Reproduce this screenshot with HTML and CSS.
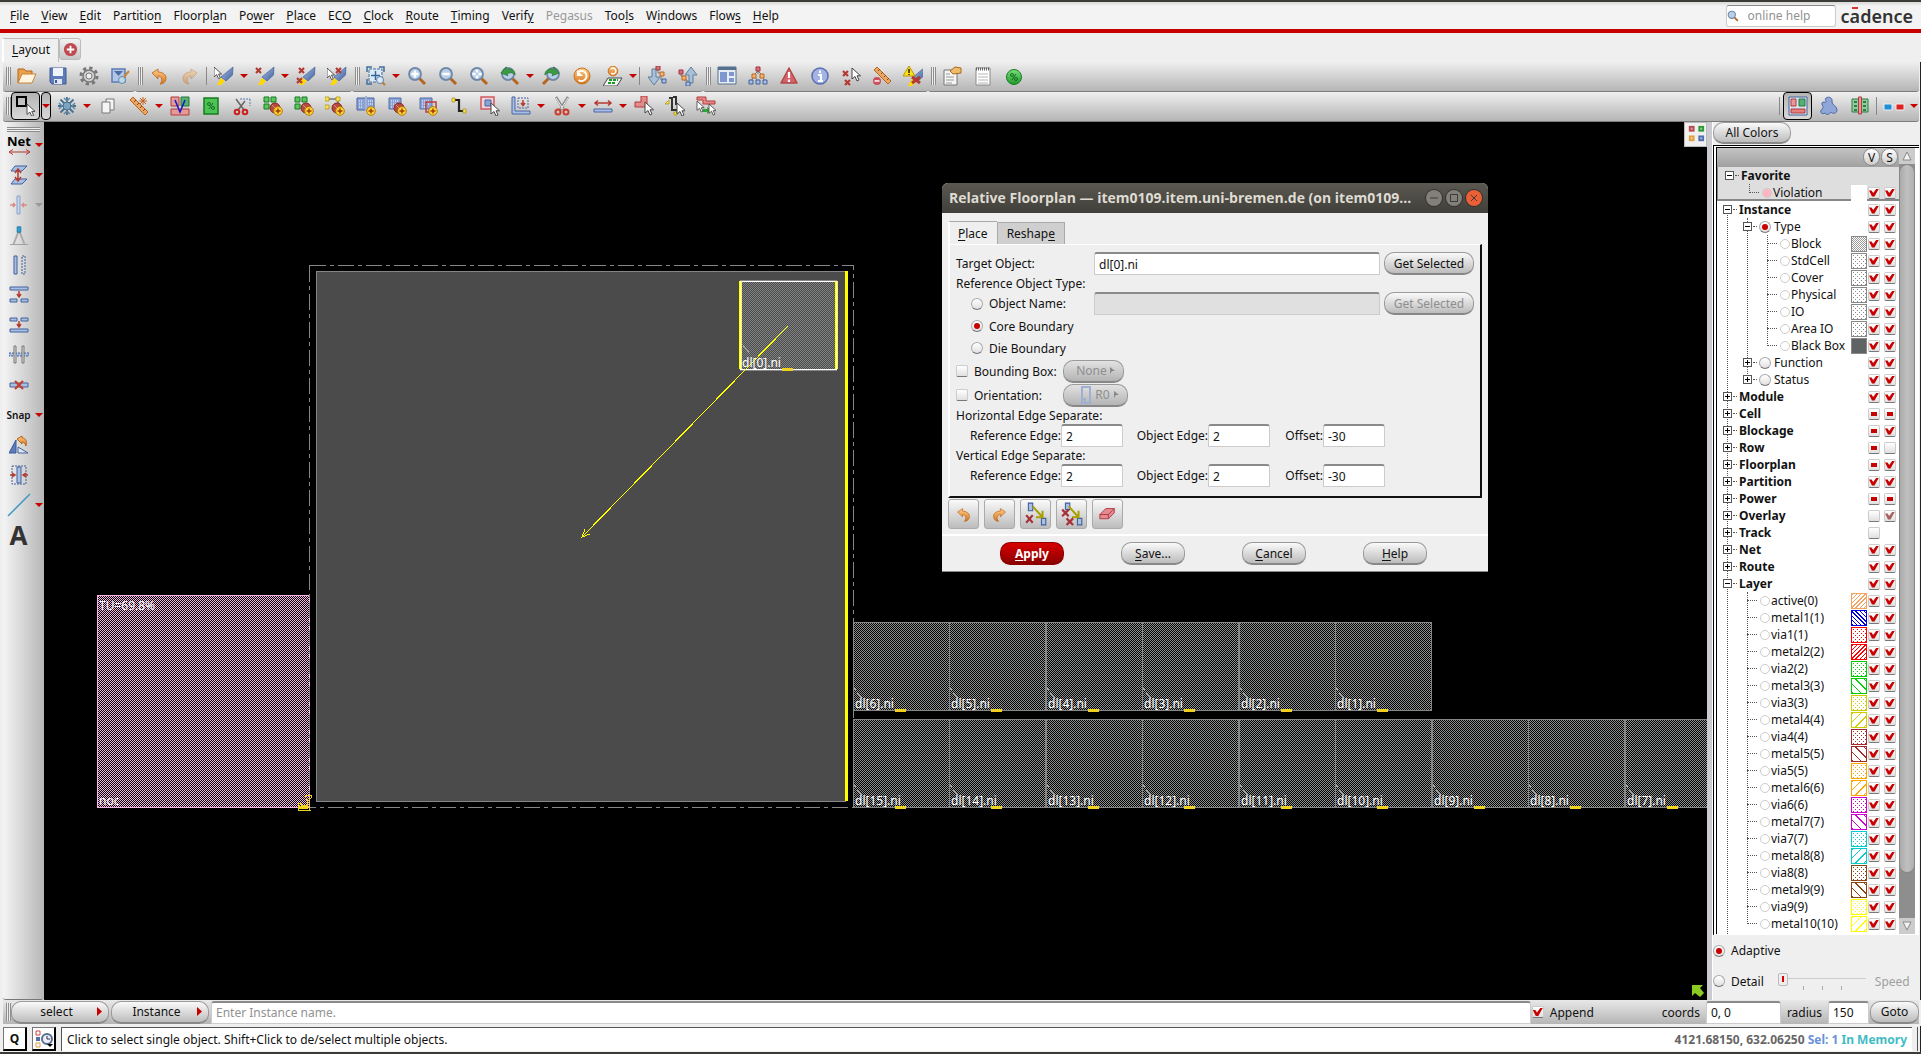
FILE: index.html
```html
<!DOCTYPE html>
<html lang="en">
<head>
<meta charset="utf-8">
<title>Layout</title>
<link rel="stylesheet" href="styles.css">
</head>
<body>
<svg class="defs" aria-hidden="true">
  <defs>
    <linearGradient id="gb" x1="0" y1="0" x2="1" y2="1"><stop offset="0" stop-color="#a9bfe4"/><stop offset="1" stop-color="#3f5f9c"/></linearGradient>
    <linearGradient id="go" x1="0" y1="0" x2="0" y2="1"><stop offset="0" stop-color="#ffcf8a"/><stop offset="1" stop-color="#d9731a"/></linearGradient>
    <linearGradient id="gg" x1="0" y1="0" x2="0" y2="1"><stop offset="0" stop-color="#7be07b"/><stop offset="1" stop-color="#1d9a28"/></linearGradient>
    <linearGradient id="gr" x1="0" y1="0" x2="0" y2="1"><stop offset="0" stop-color="#f0a5a5"/><stop offset="1" stop-color="#c03c3c"/></linearGradient>
    <path id="cur" d="M0 0V11L3 8.500L5 13L7 12L5 7.800H8.500Z" fill="#fff" stroke="#444"/>
    <path id="rx" d="M0 0L5 5M5 0L0 5" stroke="#b23a32" stroke-width="2.200"/>
    <g id="pen"><path d="M19 1L18.500 9L12 15L7 11Z" fill="url(#gb)" stroke="#42619a" stroke-width=".7"/><path d="M7 12L11 15L7 19H3Z" fill="#ffd800"/></g>
    <g id="plus"><circle cx="15" cy="15" r="4.300" fill="#ffd53d" stroke="#b97a00"/><path d="M12.500 15H17.500M15 12.500V17.500" stroke="#a33c00" stroke-width="1.500"/></g>
    <g id="mag"><path d="M12 12L18 18" stroke="#b5651d" stroke-width="3"/><circle cx="8" cy="8" r="6" fill="#b9cfe8" stroke="#7088a6" stroke-width="1.800"/></g>
    <g id="ball"><circle cx="12" cy="12" r="5" fill="#b8493f" stroke="#7c2a22"/><path d="M9 9L15 15" stroke="#e08a80"/></g>
    <path id="ugo" d="M3 7L9 3V6C14 6 17 9 17 12C17 15 15 18 11 18C14 15 13 10 9 10V13Z" fill="url(#go)" stroke="#b8651c" stroke-width=".8"/>
    <path id="grn" d="M2 9L8 2V5C13 3 18 6 18 11C15 8 12 8 9 10L10 12Z" fill="#3c9a44" stroke="#20702a" stroke-width=".7"/>
    <path id="bm" d="M2 2H14V13H2Z" fill="#8aa2d6" stroke="#5570a8"/>

    <symbol id="i-open" viewBox="0 0 20 20"><path d="M1 17V3H7L9 5H15V8" fill="#e9a24a" stroke="#b8651c"/><path d="M1 17L5 8H19L15 17Z" fill="#fff4e0" stroke="#c98238"/></symbol>
    <symbol id="i-save" viewBox="0 0 20 20"><path d="M2 2H18V18H4L2 16Z" fill="#5f7cb8" stroke="#3d5a96"/><path d="M5 2H15V10H5Z" fill="#eef3fb"/><path d="M6 13H14V18H6Z" fill="#dfe6f2"/><path d="M7 14H9V17H7Z" fill="#3d5a96"/></symbol>
    <symbol id="i-gear" viewBox="0 0 20 20"><circle cx="10" cy="10" r="8" fill="none" stroke="#77787a" stroke-width="3" stroke-dasharray="3.200 3.080"/><circle cx="10" cy="10" r="6" fill="#d4d0d0" stroke="#77787a" stroke-width="1.500"/><circle cx="10" cy="10" r="3" fill="#efefef" stroke="#77787a"/></symbol>
    <symbol id="i-sch" viewBox="0 0 20 20"><path d="M2 3H15V16H2Z" fill="#b4c6e6" stroke="#5c7bb5" stroke-width="1.500"/><path d="M4 5H13L8.500 10Z" fill="#4f6ca8"/><circle cx="12" cy="14" r="3.500" fill="#b7dbe8" stroke="#6a86a8"/><path d="M14 11L19 5" stroke="#c8853a" stroke-width="2"/></symbol>
    <symbol id="i-undo" viewBox="0 0 20 20"><use href="#ugo"/></symbol>
    <symbol id="i-redo" viewBox="0 0 20 20"><use href="#ugo" transform="translate(20 0) scale(-1 1)"/></symbol>
    <symbol id="i-hl" viewBox="0 0 20 20"><use href="#pen"/><use href="#cur" transform="translate(0 1) scale(.9)"/></symbol>
    <symbol id="i-hlx" viewBox="0 0 20 20"><use href="#pen"/><use href="#rx" x="1" y="2"/></symbol>
    <symbol id="i-hlxx" viewBox="0 0 20 20"><use href="#pen"/><use href="#rx" x="3" y="2"/><use href="#rx" x="1" y="12"/></symbol>
    <symbol id="i-hlcx" viewBox="0 0 20 20"><use href="#pen"/><use href="#cur" transform="translate(0 2) scale(.9)"/><use href="#rx" x="9" y="2"/></symbol>
    <symbol id="i-fit" viewBox="0 0 20 20"><path d="M1 6V1H6M13 1H18V6M1 13V18H6" fill="none" stroke="#3f6f9c" stroke-width="1.500"/><path d="M3 3H16V16H3Z" fill="#dce8f4" stroke="#3f6f9c" stroke-dasharray="3 1"/><path d="M9.500 5V14M5 9.500H14" stroke="#356796" stroke-width="1.500"/><circle cx="14" cy="14" r="3.500" fill="#d9e9f7" stroke="#5d81a8"/><path d="M16.500 16.500L19 19" stroke="#c07830" stroke-width="2"/></symbol>
    <symbol id="i-zin" viewBox="0 0 20 20"><use href="#mag"/><path d="M4.500 8H11.500M8 4.500V11.500" stroke="#fff" stroke-width="2.500"/></symbol>
    <symbol id="i-zout" viewBox="0 0 20 20"><use href="#mag"/><path d="M4.500 8H11.500" stroke="#fff" stroke-width="2.500"/></symbol>
    <symbol id="i-zfit" viewBox="0 0 20 20"><use href="#mag"/><path d="M8 3.500V12.500M3.500 8H12.500" stroke="#fff" stroke-width="2.500" stroke-dasharray="3 3"/></symbol>
    <symbol id="i-zprev" viewBox="0 0 20 20"><use href="#mag"/><use href="#grn" transform="translate(-1 -1) scale(.9)"/></symbol>
    <symbol id="i-znext" viewBox="0 0 20 20"><use href="#mag" transform="translate(20 0) scale(-1 1)"/><use href="#grn" transform="translate(20 -1) scale(-.9 .9)"/></symbol>
    <symbol id="i-ref" viewBox="0 0 20 20"><circle cx="10" cy="10" r="8" fill="url(#go)" stroke="#c8741c"/><path d="M6.500 6A5 5 0 1 1 6.500 14" fill="none" stroke="#fff" stroke-width="2"/><path d="M5 4V10H11Z" fill="#fff"/></symbol>
    <symbol id="i-refs" viewBox="0 0 20 20"><path d="M5 12H19L14 20H0Z" fill="#f4f4f4" stroke="#444"/><path d="M6 14H15M5 17H13" stroke="#1d9a28" stroke-width="2" stroke-dasharray="3 1"/><circle cx="10" cy="5" r="4.800" fill="url(#go)" stroke="#c8741c"/><path d="M8 3A2.800 2.800 0 1 1 8 7" fill="none" stroke="#fff" stroke-width="1.300"/></symbol>
    <symbol id="i-down" viewBox="0 0 20 20"><path d="M5 3H9V11H13L7 19L1 11H5Z" fill="#a8c0d8" stroke="#5f7f9f"/><path d="M11 3V7H14V14H17" fill="none" stroke="#777"/><path d="M9 0H13V4H9Z" fill="#d9737a" stroke="#a03038"/><path d="M13 6H17V10H13Z" fill="#f2b27a" stroke="#b86a20"/><path d="M15 13H19V17H15Z" fill="#a9bfe4" stroke="#42619a"/></symbol>
    <symbol id="i-up" viewBox="0 0 20 20"><path d="M11 17H15V9H19L13 1L7 9H11Z" fill="#a8c0d8" stroke="#5f7f9f"/><path d="M3 6V10H6V14H9V18" fill="none" stroke="#777"/><path d="M1 4H5V8H1Z" fill="#d9737a" stroke="#a03038"/><path d="M4 10H8V14H4Z" fill="#f2b27a" stroke="#b86a20"/><path d="M8 16H12V20H8Z" fill="#a9bfe4" stroke="#42619a"/></symbol>
    <symbol id="i-win" viewBox="0 0 20 20"><path d="M1 1H19V18H1Z" fill="#e9edf4" stroke="#56708f"/><path d="M1 1H19V4H1Z" fill="#56708f"/><path d="M3 6H10V16H3Z" fill="#7e98cf"/><path d="M12 6H17V10H12ZM12 12H17V16H12Z" fill="#7e98cf"/></symbol>
    <symbol id="i-tree" viewBox="0 0 20 20"><path d="M10 4V8M6 10L3 15M6 10L10 15M14 10L17 15M10 5L6 9M10 5L14 9" stroke="#777"/><path d="M8 1H12V5H8Z" fill="#d9737a" stroke="#a03038"/><path d="M4 8H8V12H4ZM12 8H16V12H12Z" fill="#f2b27a" stroke="#b86a20"/><path d="M1 14H5V18H1ZM8 14H12V18H8ZM15 14H19V18H15Z" fill="#a9bfe4" stroke="#42619a"/></symbol>
    <symbol id="i-warn" viewBox="0 0 20 20"><path d="M10 2L18 17H2Z" fill="#d8606a" stroke="#b04848" stroke-width="1.500" stroke-linejoin="round"/><path d="M10 6V12M10 13.500V16" stroke="#fff" stroke-width="2.200"/></symbol>
    <symbol id="i-info" viewBox="0 0 20 20"><circle cx="10" cy="10" r="8" fill="#a3b4e4" stroke="#5a6fb0" stroke-width="1.500"/><path d="M8 9H11V15M8 15H13M10 4.500V7" stroke="#fff" stroke-width="2" fill="none"/></symbol>
    <symbol id="i-desel" viewBox="0 0 20 20"><use href="#rx" x="2" y="5"/><use href="#rx" x="4" y="14"/><use href="#cur" transform="translate(11 2)"/></symbol>
    <symbol id="i-rulx" viewBox="0 0 20 20"><path d="M5 1L19 15L16 18L2 4Z" fill="#eaa666" stroke="#b8651c"/><path d="M8 3L6 5M11 6L9 8M14 9L12 11M17 12L15 14" stroke="#8a4a10"/><circle cx="5" cy="15" r="4" fill="#c9505a"/><path d="M2.500 15H7.500" stroke="#fff" stroke-width="1.500"/></symbol>
    <symbol id="i-wpen" viewBox="0 0 20 20"><use href="#pen" transform="translate(2 1)"/><path d="M6 0L12 10H0Z" fill="#ffe11a" stroke="#b89600"/><path d="M6 3V7M6 8V9" stroke="#000" stroke-width="1.300"/><path d="M9 11L17 17M17 11L9 17" stroke="#b23a32" stroke-width="3"/></symbol>
    <symbol id="i-note" viewBox="0 0 20 20"><path d="M2 4H15V19H2Z" fill="#f5f5f5" stroke="#777"/><path d="M4 8H8M4 11H12M4 14H12M4 17H10" stroke="#999"/><path d="M8 5L13 1L19 2V7L11 8Z" fill="#f0bb6a" stroke="#a86a1c"/></symbol>
    <symbol id="i-pad" viewBox="0 0 20 20"><path d="M3 2H17V19H3Z" fill="#fff" stroke="#888"/><path d="M3 3H17" stroke="#666" stroke-width="3" stroke-dasharray="1 1"/><path d="M5 8H15M5 11H15M5 14H15M5 17H15" stroke="#b5b5b5"/></symbol>
    <symbol id="i-pct" viewBox="0 0 20 20"><circle cx="10" cy="11" r="7.500" fill="url(#gg)" stroke="#187a22"/><circle cx="8" cy="9" r="1.500" fill="none" stroke="#176b20"/><circle cx="12" cy="13" r="1.500" fill="none" stroke="#176b20"/><path d="M12 8L8 14" stroke="#176b20"/></symbol>

    <symbol id="i-sel" viewBox="0 0 20 20"><path d="M1 1H10V10H1Z" fill="none" stroke="#000" stroke-width="2"/><use href="#cur" transform="translate(11 8)scale(.95)"/></symbol>
    <symbol id="i-frz" viewBox="0 0 20 20"><path d="M10 1V19M1 10H19M3.500 3.500L16.500 16.500M16.500 3.500L3.500 16.500" stroke="#47708f" stroke-width="1.800"/><path d="M7 2L10 5L13 2M7 18L10 15L13 18M2 7L5 10L2 13M18 7L15 10L18 13" fill="none" stroke="#5f87a5" stroke-width="1.500"/><circle cx="10" cy="10" r="4" fill="#7ea5c0" stroke="#47708f"/></symbol>
    <symbol id="i-copy" viewBox="0 0 20 20"><path d="M8 3H16V14H8Z" fill="#f5f5f5" stroke="#777"/><path d="M4 6H12V17H4Z" fill="#f5f5f5" stroke="#777"/></symbol>
    <symbol id="i-rul" viewBox="0 0 20 20"><path d="M4 1L19 16L16 19L1 4Z" fill="#eaa666" stroke="#b8651c"/><path d="M7 4L5 6M10 7L8 9M13 10L11 12M16 13L14 15" stroke="#8a4a10"/><path d="M14 1V9M10 5H18M11 2L17 8M17 2L11 8" stroke="#c0601c"/></symbol>
    <symbol id="i-v" viewBox="0 0 20 20"><path d="M1 1H9V10H1Z" fill="#e59a9a" stroke="#b23a3a"/><path d="M11 1H19V10H11Z" fill="#57b070" stroke="#237a3c"/><path d="M1 13H19V19H1Z" fill="#e59a9a" stroke="#b23a3a"/><path d="M5 4L10 16L15 4" fill="none" stroke="#1414c8" stroke-width="1.500"/></symbol>
    <symbol id="i-psq" viewBox="0 0 20 20"><path d="M3 2H17V18H3Z" fill="#4cc455" stroke="#187a22" stroke-width="1.500"/><circle cx="8" cy="8" r="1.500" fill="none" stroke="#176b20"/><circle cx="12" cy="12" r="1.500" fill="none" stroke="#176b20"/><path d="M12 7L8 13" stroke="#176b20"/></symbol>
    <symbol id="i-cut" viewBox="0 0 20 20"><path d="M8 3H18M18 3V10" fill="none" stroke="#5c7bb5" stroke-dasharray="2 1"/><path d="M4 3L12 14M13 5L6 14" stroke="#666" stroke-width="1.500"/><circle cx="5" cy="16" r="2.300" fill="none" stroke="#cc1f1f" stroke-width="2"/><circle cx="13" cy="16" r="2.300" fill="none" stroke="#cc1f1f" stroke-width="2"/></symbol>
    <symbol id="i-g1" viewBox="0 0 20 20"><path d="M1 1H6V6H1ZM8 1H13V6H8ZM1 8H6V13H1Z" fill="#58c85c" stroke="#187a22"/><use href="#ball"/><use href="#plus"/></symbol>
    <symbol id="i-g2" viewBox="0 0 20 20"><path d="M2 3H13V12" fill="none" stroke="#444"/><path d="M0 1H4V5H0ZM11 1H15V5H11ZM0 9H4V13H0Z" fill="#ffe24a" stroke="#a08c10" stroke-width=".7"/><use href="#ball"/><use href="#plus"/></symbol>
    <symbol id="i-g3" viewBox="0 0 20 20"><path d="M1 2H18V14H1Z" fill="#8aa2d6" stroke="#4a65a0"/><path d="M10 0V15" stroke="#fff" stroke-width="2"/><path d="M10 0V15" stroke="#4a65a0"/><path d="M3 5H7M3 8H7M3 11H7M12 5H17M12 8H17" stroke="#fff" stroke-dasharray="1 1"/><use href="#plus"/></symbol>
    <symbol id="i-g4" viewBox="0 0 20 20"><use href="#bm"/><path d="M4 5H12M4 8H12M4 11H10" stroke="#fff" stroke-dasharray="1 1"/><use href="#ball"/><use href="#plus"/></symbol>
    <symbol id="i-g5" viewBox="0 0 20 20"><use href="#bm"/><path d="M4 5H12M4 8H12M4 11H10" stroke="#fff" stroke-dasharray="1 1"/><path d="M8 6H18V16H8Z" fill="none" stroke="#c03c3c" stroke-width="1.500"/><use href="#plus"/></symbol>
    <symbol id="i-z" viewBox="0 0 20 20"><path d="M5 4H10V15H15" fill="none" stroke="#222" stroke-width="2.200"/><path d="M3 2H6V6H3ZM14 13H17V17H14Z" fill="#ffe24a" stroke="#a08c10" stroke-width=".7"/></symbol>
    <symbol id="i-rsel" viewBox="0 0 20 20"><path d="M1 1H14V13H1Z" fill="#f0d4d8" stroke="#d05a60" stroke-width="1.500"/><path d="M5 4H11V10H5Z" fill="#8aa2d6" stroke="#4a65a0"/><use href="#cur" transform="translate(11 7)"/></symbol>
    <symbol id="i-axis" viewBox="0 0 20 20"><path d="M1 1H4V15H19V18H1Z" fill="#a9bfe4" stroke="#4a65a0"/><path d="M7 2H17V12H7Z" fill="none" stroke="#4a65a0" stroke-dasharray="2 1"/><path d="M12 4V9M10 7L12 9.500L14 7" stroke="#b23a32" stroke-width="1.500" fill="none"/></symbol>
    <symbol id="i-cut2" viewBox="0 0 20 20"><path d="M4 1L12 14M16 1L8 14" stroke="#8a8a8a" stroke-width="2.500"/><path d="M4 2L11 13M16 2L9 13" stroke="#eee"/><circle cx="6" cy="16" r="2.500" fill="none" stroke="#cc3a2c" stroke-width="2"/><circle cx="14" cy="16" r="2.500" fill="none" stroke="#cc3a2c" stroke-width="2"/></symbol>
    <symbol id="i-bar" viewBox="0 0 20 20"><path d="M1 13H19V16H1Z" fill="#a9bfe4" stroke="#4a65a0"/><path d="M3 7H17M5 4.500L2 7L5 9.500M15 4.500L18 7L15 9.500" stroke="#b23a32" stroke-width="1.500" fill="none"/></symbol>
    <symbol id="i-poly" viewBox="0 0 20 20"><path d="M7 0H13V11H1V6H7Z" fill="#e58a8a" stroke="#b23a3a"/><use href="#cur" transform="translate(11 6)"/></symbol>
    <symbol id="i-zs" viewBox="0 0 20 20"><path d="M4 2H7V14H13M8 1H11V9" fill="none" stroke="#333" stroke-width="2"/><path d="M0 8L4 4V8ZM9 19H12V16H9Z" fill="#ffe24a" stroke="#a08c10" stroke-width=".7"/><use href="#cur" transform="translate(12 7)"/></symbol>
    <symbol id="i-rs" viewBox="0 0 20 20"><path d="M1 1H10V5H19V8H7V4H1Z" fill="#e58a8a" stroke="#b23a3a"/><use href="#cur" transform="translate(1 5)scale(.85)"/><path d="M7 13H11V11L15 14.500L11 18V16H7Z" fill="#2fa33a"/><use href="#cur" transform="translate(13 8)scale(.85)"/></symbol>
    <symbol id="i-fp" viewBox="0 0 20 20"><path d="M1 1H19V19H1Z" fill="#d9e2f3" stroke="#42619a"/><path d="M3 3H8V10H3Z" fill="#e59a9a" stroke="#b23a3a"/><path d="M11 3H17V10H11Z" fill="#57b070" stroke="#237a3c"/><path d="M3 13H17V17H3Z" fill="#e58080" stroke="#b23a3a"/></symbol>
    <symbol id="i-blob" viewBox="0 0 20 20"><path d="M7 2C10 0 14 2 13 6C13 9 18 10 18 14C18 18 13 18 12 16C10 19 7 19 6 17C3 19 0 16 3 13C6 11 2 9 3 7C4 5 6 7 7 6C8 5 5 4 7 2Z" fill="#8ea6d8" stroke="#4f68a4"/></symbol>
    <symbol id="i-phy" viewBox="0 0 20 20"><path d="M2 3H18V16H2Z" fill="#8fcf9c" stroke="#2f7a44"/><path d="M4 6H7M4 10H7M4 14H7M13 6H16M13 10H16M13 14H16" stroke="#1f5a30" stroke-width="1.500"/><path d="M8.500 1H11.500V18H8.500Z" fill="#e59a9a" stroke="#b23a3a"/></symbol>
    <symbol id="i-3d" viewBox="0 0 24 20"><path d="M1 4L2 9M23 4L22 9M1 9H23" stroke="#ddd" stroke-width="2"/><path d="M2 8H10V14H2Z" fill="#1e8fd8" stroke="#eee"/><path d="M14 8H22V14H14Z" fill="#e02020" stroke="#eee"/></symbol>

    <symbol id="l-net" viewBox="0 0 30 22"><text x="0" y="12" class="netlab">Net</text><path d="M3 18H22M6 15.500L2 18L6 20.500M19 15.500L23 18L19 20.500" stroke="#b23a32" fill="none"/></symbol>
    <symbol id="l-via" viewBox="0 0 20 20"><path d="M6 1H18L13 6H2Z" fill="#a9bfe4" stroke="#42619a"/><path d="M6 14H18L13 19H2Z" fill="#a9bfe4" stroke="#42619a"/><path d="M9 5V15M6 8L9 4L12 8M6 12L9 16L12 12" stroke="#b23a32" stroke-width="1.500" fill="none"/></symbol>
    <symbol id="l-vb" viewBox="0 0 20 20"><path d="M8 1H11V19H8Z" fill="#c5d3ec" stroke="#8ba2c8"/><path d="M1 10H6M4 8L6 10L4 12M18 10H13M15 8L13 10L15 12" stroke="#d88a84" fill="none" stroke-width="1.500"/></symbol>
    <symbol id="l-cmp" viewBox="0 0 20 22"><path d="M10 6L4 21M10 6L16 21" stroke="#aaa" stroke-width="2"/><path d="M8 2H12V8H8Z" fill="#2f9fd0" stroke="#1c7aa8"/><path d="M0 21.500H20" stroke="#999"/></symbol>
    <symbol id="l-2b" viewBox="0 0 20 20"><path d="M5 1H8V19H5Z" fill="#a9bfe4" stroke="#42619a"/><path d="M13 1H16V19H13Z" fill="none" stroke="#42619a" stroke-dasharray="2 1"/></symbol>
    <symbol id="l-t1" viewBox="0 0 20 20"><path d="M1 2H19V5H1ZM1 14H8V17H1ZM12 14H19V17H12Z" fill="#a9bfe4" stroke="#42619a"/><path d="M10 6V11M8 9L10 12L12 9" stroke="#b23a32" stroke-width="1.500" fill="none"/></symbol>
    <symbol id="l-t2" viewBox="0 0 20 20"><path d="M1 3H8V6H1ZM12 3H19V6H12ZM1 14H19V17H1Z" fill="#a9bfe4" stroke="#42619a"/><path d="M10 6V11M8 9L10 12L12 9" stroke="#b23a32" stroke-width="1.500" fill="none"/></symbol>
    <symbol id="l-hh" viewBox="0 0 20 20"><path d="M0 8H20V11H0Z" fill="#a9bfe4" stroke="#42619a" stroke-dasharray="2 1"/><path d="M5 1H7V18H5ZM13 1H15V18H13Z" fill="#ddd" stroke="#777"/></symbol>
    <symbol id="l-hx" viewBox="0 0 20 20"><path d="M1 8H19V12H1Z" fill="#a9bfe4" stroke="#42619a"/><path d="M6 6L14 14M14 6L6 14" stroke="#c0402f" stroke-width="2.200"/></symbol>
    <symbol id="l-flip" viewBox="0 0 20 20"><path d="M7 5V18H0Z" fill="#5f7cb8" stroke="#3d5a96"/><path d="M9 12L19 18H9Z" fill="#dfe7f6" stroke="#42619a"/><path d="M8 4L13 1V3C17 3 18 6 17 11C16 8 15 7 13 7V9Z" fill="url(#go)" stroke="#b8651c"/></symbol>
    <symbol id="l-al" viewBox="0 0 20 20"><path d="M3 1H17V19H3Z" fill="none" stroke="#42619a" stroke-dasharray="2 1"/><path d="M8 2H12V18H8Z" fill="#a9bfe4" stroke="#42619a"/><path d="M1 10H5M3 8L6 10L3 12M19 10H15M17 8L14 10L17 12" stroke="#b23a32" stroke-width="1.500" fill="none"/></symbol>
    <symbol id="l-line" viewBox="0 0 24 24"><path d="M1 23L23 1" stroke="#3f9ac4" stroke-width="1.500"/></symbol>

    <symbol id="d-1x" viewBox="0 0 20 22"><path d="M3 1H7V8H3ZM15 15H19V21H15Z" fill="#a9bfe4" stroke="#42619a"/><path d="M7 4L16 14M16 8V14H10" stroke="#a8a000" stroke-width="1.800" fill="none"/><path d="M1 12L7 19M7 12L1 19" stroke="#a83038" stroke-width="2"/></symbol>
    <symbol id="d-2x" viewBox="0 0 20 22"><path d="M4 1H8V7H4ZM15 15H19V21H15Z" fill="#a9bfe4" stroke="#42619a"/><path d="M7 4L16 14M16 8V14H10" stroke="#a8a000" stroke-width="1.800" fill="none"/><path d="M1 7L7 13M7 7L1 13M5 15L11 21M11 15L5 21" stroke="#a83038" stroke-width="2"/></symbol>
    <symbol id="d-er" viewBox="0 0 20 20"><path d="M1 10L8 3H18V8L11 15H1Z" fill="#e58a92" stroke="#a83038"/><path d="M1 10H11L18 3M11 10V15" fill="none" stroke="#a83038"/></symbol>

    <pattern id="chk" width="2" height="2" patternUnits="userSpaceOnUse"><path d="M0 0H1V1H0ZM1 1H2V2H1Z" fill="#8f9090"/></pattern>
    <pattern id="chp" width="2" height="2" patternUnits="userSpaceOnUse"><path d="M0 0H1V1H0ZM1 1H2V2H1Z" fill="#f8b4e4"/></pattern>
    <g id="blk"><path d="M0 0H96V88H0Z" fill="url(#chk)"/><path d="M0 .5H97M0 88.500H97M.5 0V88M96.500 0V88" stroke="#858686"/><path d="M1 66L9 77" stroke="#a0a0a0" fill="none"/><path d="M42 87H53V90H42Z" fill="#f0d020"/></g>
  </defs>
</svg>

<nav class="menubar">
  <a href="#"><u>F</u>ile</a><a href="#"><u>V</u>iew</a><a href="#"><u>E</u>dit</a><a href="#">Partitio<u>n</u></a><a href="#">Floorpl<u>a</u>n</a><a href="#">Po<u>w</u>er</a><a href="#"><u>P</u>lace</a><a href="#">EC<u>O</u></a><a href="#"><u>C</u>lock</a><a href="#"><u>R</u>oute</a><a href="#"><u>T</u>iming</a><a href="#">Verif<u>y</u></a><a href="#" class="off">Pegasus</a><a href="#">Too<u>l</u>s</a><a href="#">W<u>i</u>ndows</a><a href="#">Flow<u>s</u></a><a href="#"><u>H</u>elp</a>
  <label class="search"><svg viewBox="0 0 20 20"><use href="#mag"/></svg><input type="search" placeholder="online help" aria-label="online help"></label>
  <span class="logo">c<span class="bar">a</span>dence</span>
</nav>

<div class="tabs"><button class="tab"><span><u>L</u>ayout</span></button><button class="addtab" aria-label="Add tab"><svg viewBox="0 0 16 16"><circle cx="8" cy="8" r="7" fill="#bd4a50"/><path d="M4 8H12M8 4V12" stroke="#fff" stroke-width="2"/></svg></button></div>

<div class="bars">
  <div class="barrow">
    <div class="group"><i class="grip"></i>
      <button class="tb" aria-label="Open"><svg><use href="#i-open"/></svg></button><button class="tb" aria-label="Save"><svg><use href="#i-save"/></svg></button><button class="tb" aria-label="Settings"><svg><use href="#i-gear"/></svg></button><button class="tb" aria-label="Schematic"><svg><use href="#i-sch"/></svg></button>
    </div>
    <div class="group"><i class="grip"></i>
      <button class="tb" aria-label="Undo"><svg><use href="#i-undo"/></svg></button><button class="tb faded" aria-label="Redo"><svg><use href="#i-redo"/></svg></button><i class="sep"></i><button class="tb" aria-label="Highlight"><svg><use href="#i-hl"/></svg></button><button class="caret" aria-label="More"></button><button class="tb" aria-label="Clear highlight"><svg><use href="#i-hlx"/></svg></button><button class="caret" aria-label="More"></button><button class="tb" aria-label="Clear all highlights"><svg><use href="#i-hlxx"/></svg></button><button class="tb" aria-label="Clear selected"><svg><use href="#i-hlcx"/></svg></button>
    </div>
    <div class="group"><i class="grip"></i>
      <button class="tb" aria-label="Zoom area"><svg><use href="#i-fit"/></svg></button><button class="caret" aria-label="More"></button><button class="tb" aria-label="Zoom in"><svg><use href="#i-zin"/></svg></button><button class="tb" aria-label="Zoom out"><svg><use href="#i-zout"/></svg></button><button class="tb" aria-label="Fit"><svg><use href="#i-zfit"/></svg></button><button class="tb" aria-label="Previous view"><svg><use href="#i-zprev"/></svg></button><button class="caret" aria-label="More"></button><button class="tb" aria-label="Next view"><svg><use href="#i-znext"/></svg></button><button class="tb" aria-label="Redraw"><svg><use href="#i-ref"/></svg></button><button class="tb" aria-label="Refresh design"><svg><use href="#i-refs"/></svg></button><button class="caret" aria-label="More"></button><i class="sep"></i><button class="tb" aria-label="Descend"><svg><use href="#i-down"/></svg></button><button class="tb" aria-label="Ascend"><svg><use href="#i-up"/></svg></button>
    </div>
    <div class="group"><i class="grip"></i>
      <button class="tb" aria-label="Panels"><svg><use href="#i-win"/></svg></button><button class="tb" aria-label="Hierarchy"><svg><use href="#i-tree"/></svg></button><button class="tb" aria-label="Violations"><svg><use href="#i-warn"/></svg></button><button class="tb" aria-label="Information"><svg><use href="#i-info"/></svg></button><button class="tb" aria-label="Deselect"><svg><use href="#i-desel"/></svg></button><button class="tb" aria-label="Clear rulers"><svg><use href="#i-rulx"/></svg></button><button class="tb" aria-label="Clear markers"><svg><use href="#i-wpen"/></svg></button>
    </div>
    <div class="group grow"><i class="grip"></i>
      <button class="tb" aria-label="Properties"><svg><use href="#i-note"/></svg></button><button class="tb" aria-label="Notes"><svg><use href="#i-pad"/></svg></button><button class="tb" aria-label="Density"><svg><use href="#i-pct"/></svg></button>
    </div>
  </div>
  <div class="barrow">
    <div class="group grow"><i class="grip"></i>
      <button class="tb pressed" aria-label="Select"><svg><use href="#i-sel"/></svg></button><button class="caret pressed" aria-label="More"></button><button class="tb" aria-label="Freeze"><svg><use href="#i-frz"/></svg></button><button class="caret" aria-label="More"></button><button class="tb" aria-label="Copy"><svg><use href="#i-copy"/></svg></button><button class="tb" aria-label="Ruler"><svg><use href="#i-rul"/></svg></button><button class="caret" aria-label="More"></button><button class="tb" aria-label="Verify"><svg><use href="#i-v"/></svg></button><button class="tb" aria-label="Utilization"><svg><use href="#i-psq"/></svg></button><button class="tb" aria-label="Cut"><svg><use href="#i-cut"/></svg></button><button class="tb" aria-label="Add fence"><svg><use href="#i-g1"/></svg></button><button class="tb" aria-label="Add region"><svg><use href="#i-g1"/></svg></button><button class="tb" aria-label="Add guide"><svg><use href="#i-g2"/></svg></button><button class="tb" aria-label="Add row"><svg><use href="#i-g3"/></svg></button><button class="tb" aria-label="Add blockage"><svg><use href="#i-g4"/></svg></button><button class="tb" aria-label="Add halo"><svg><use href="#i-g5"/></svg></button><button class="tb" aria-label="Wire"><svg><use href="#i-z"/></svg></button><button class="tb" aria-label="Select block"><svg><use href="#i-rsel"/></svg></button><button class="tb" aria-label="Align"><svg><use href="#i-axis"/></svg></button><button class="caret" aria-label="More"></button><button class="tb" aria-label="Split"><svg><use href="#i-cut2"/></svg></button><button class="caret" aria-label="More"></button><button class="tb" aria-label="Stretch"><svg><use href="#i-bar"/></svg></button><button class="caret" aria-label="More"></button><button class="tb" aria-label="Select shape"><svg><use href="#i-poly"/></svg></button><button class="tb" aria-label="Select wire"><svg><use href="#i-zs"/></svg></button><button class="tb" aria-label="Reshape"><svg><use href="#i-rs"/></svg></button>
      <i class="sep push"></i><button class="tb pressed" aria-label="Floorplan view"><svg><use href="#i-fp"/></svg></button><button class="tb" aria-label="Amoeba view"><svg><use href="#i-blob"/></svg></button><button class="tb" aria-label="Physical view"><svg><use href="#i-phy"/></svg></button><i class="sep"></i><button class="tb" aria-label="3D view"><svg class="wide"><use href="#i-3d"/></svg></button><button class="caret" aria-label="More"></button>
    </div>
  </div>
</div>

<main class="work">
  <div class="side">
    <i class="vgrip"></i>
    <div class="srow"><button aria-label="Net"><svg class="net"><use href="#l-net"/></svg></button><button class="caret" aria-label="More"></button></div>
    <div class="srow"><button aria-label="Via"><svg><use href="#l-via"/></svg></button><button class="caret" aria-label="More"></button></div>
    <div class="srow"><button aria-label="Spacing"><svg><use href="#l-vb"/></svg></button><button class="caret grey" aria-label="More"></button></div>
    <div class="srow"><button aria-label="Compass"><svg><use href="#l-cmp"/></svg></button></div>
    <div class="srow"><button aria-label="Duplicate wire"><svg><use href="#l-2b"/></svg></button></div>
    <div class="srow"><button aria-label="Merge up"><svg><use href="#l-t1"/></svg></button></div>
    <div class="srow"><button aria-label="Merge down"><svg><use href="#l-t2"/></svg></button></div>
    <div class="srow"><button aria-label="Cross"><svg><use href="#l-hh"/></svg></button></div>
    <div class="srow"><button aria-label="Cut wire"><svg><use href="#l-hx"/></svg></button></div>
    <div class="srow"><button class="snap">Snap</button><button class="caret" aria-label="More"></button></div>
    <div class="srow"><button aria-label="Flip"><svg><use href="#l-flip"/></svg></button></div>
    <div class="srow"><button aria-label="Shrink"><svg><use href="#l-al"/></svg></button></div>
    <div class="srow"><button aria-label="Line"><svg class="big"><use href="#l-line"/></svg></button><button class="caret" aria-label="More"></button></div>
    <div class="srow"><button class="bigA">A</button></div>
  </div>

  <div class="canvas">
    <svg class="plan">
      <g transform="translate(-44 -122)" shape-rendering="crispEdges">
        <path d="M97 595H310V808H97Z" fill="url(#chp)"/>
        <path d="M97.500 595.500H309.500V807.500H97.500Z" fill="none" stroke="#f8b4e4"/>
        <path d="M309.500 265.500H853.500V807.500H309.500Z" fill="none" stroke="#868686" stroke-dasharray="16 4 4 4"/>
        <path d="M316 271H848V801H316Z" fill="#4b4b4b"/>
        <path d="M316.500 801.500V271.500H846M316 801.500H846" fill="none" stroke="#868686"/>
        <path d="M845 271H848V801H845Z" fill="#ff0"/>
        <path d="M741 281H837V369H741Z" fill="url(#chk)" opacity=".8"/>
        <path d="M740 280.500H837M740 370.500H837" stroke="#868686"/>
        <path d="M740 281.500H837M740 369.500H837" stroke="#fff"/>
        <path d="M739.500 281V369M837.500 281V369" stroke="#ff0"/><path d="M740.500 281V369M836.500 281V369" stroke="#fff"/><path d="M741.500 281V369M835.500 281V369" stroke="#ff0"/>
        <path d="M742 344L750 354" stroke="#a0a0a0"/>
        <path d="M782 368H793V371H782Z" fill="#f0d020"/>
        <path d="M788 326L582 537M585 529L582 537L590 534" fill="none" stroke="#ff0"/>
        <path d="M305 795H312L311 798L309 799V807L310 810H298V803H301V805H307V800L306 798Z" fill="none" stroke="#f0d020"/><path d="M299 806H308V809H299Z" fill="#f0d020"/>
        <use href="#blk" x="853" y="622"/><use href="#blk" x="949" y="622"/><use href="#blk" x="1046" y="622"/><use href="#blk" x="1142" y="622"/><use href="#blk" x="1239" y="622"/><use href="#blk" x="1335" y="622"/>
        <use href="#blk" x="853" y="719"/><use href="#blk" x="949" y="719"/><use href="#blk" x="1046" y="719"/><use href="#blk" x="1142" y="719"/><use href="#blk" x="1239" y="719"/><use href="#blk" x="1335" y="719"/><use href="#blk" x="1432" y="719"/><use href="#blk" x="1528" y="719"/><use href="#blk" x="1625" y="719"/>
        <g class="lab">
          <text x="99" y="610">TU=69.8%</text><text x="99" y="805">noc</text><text x="742" y="367">dl[0].ni</text>
          <text x="855" y="708">dl[6].ni</text><text x="951" y="708">dl[5].ni</text><text x="1048" y="708">dl[4].ni</text><text x="1144" y="708">dl[3].ni</text><text x="1241" y="708">dl[2].ni</text><text x="1337" y="708">dl[1].ni</text>
          <text x="855" y="805">dl[15].ni</text><text x="951" y="805">dl[14].ni</text><text x="1048" y="805">dl[13].ni</text><text x="1144" y="805">dl[12].ni</text><text x="1241" y="805">dl[11].ni</text><text x="1337" y="805">dl[10].ni</text><text x="1434" y="805">dl[9].ni</text><text x="1530" y="805">dl[8].ni</text><text x="1627" y="805">dl[7].ni</text>
        </g>
      </g>
    </svg>
    <button class="palette" aria-label="Colors"><svg viewBox="0 0 22 24"><path d="M4 3H10V9H4Z" fill="#b8484c"/><path d="M14 3H20V9H14Z" fill="#2c9a34"/><path d="M4 13H10V19H4Z" fill="#e0a040"/><path d="M14 13H20V19H14Z" fill="#5070b0"/><path d="M6 5H8V7H6ZM16 5H18V7H16ZM6 15H8V17H6ZM16 15H18V17H16Z" fill="#ffffff80"/></svg></button>
    <svg class="corner" viewBox="0 0 12 12"><path d="M0 0H11L8 3L12 8L8 12L3 8L0 11Z" fill="#8ccc20"/></svg>

    <section class="dialog">
      <header><h1>Relative Floorplan — item0109.item.uni-bremen.de (on item0109...</h1><button aria-label="Minimize"><svg viewBox="0 0 16 16"><path d="M4 8H12"/></svg></button><button aria-label="Maximize"><svg viewBox="0 0 16 16"><path d="M4.500 4.500H11.500V11.500H4.500Z"/></svg></button><button class="close" aria-label="Close"><svg viewBox="0 0 16 16"><path d="M5 5L11 11M11 5L5 11"/></svg></button></header>
      <div class="dtabs"><button class="on"><span><u>P</u>lace</span></button><button><span>Reshap<u>e</u></span></button></div>
      <form class="pane">
        <div class="frow h23"><label class="c1" for="target">Target Object:</label><input id="target" type="text" value="dl[0].ni"><button type="button" class="pill">Get Selected</button></div>
        <div class="frow h17">Reference Object Type:</div>
        <div class="frow h23"><label class="c1 ind"><input type="radio" name="ref"> Object Name:</label><input type="text" aria-label="Object Name" disabled><button type="button" class="pill" disabled>Get Selected</button></div>
        <div class="frow h22"><label class="ind"><input type="radio" name="ref" checked> Core Boundary</label></div>
        <div class="frow h22"><label class="ind"><input type="radio" name="ref"> Die Boundary</label></div>
        <div class="frow h24"><label class="c2"><input type="checkbox"> Bounding Box:</label><span class="combo none"><select disabled aria-label="Bounding Box side"><option>None</option></select><svg viewBox="0 0 6 8"><path d="M0 0L5 4H2L0 7Z"/></svg></span></div>
        <div class="frow h24"><label class="c2"><input type="checkbox"> Orientation:</label><span class="combo rot"><svg class="ori" viewBox="0 0 10 18"><path d="M1 1H9V17H1ZM1 13H4V17" /></svg><select disabled aria-label="Orientation value"><option>R0</option></select><svg viewBox="0 0 6 8"><path d="M0 0L5 4H2L0 7Z"/></svg></span></div>
        <div class="frow h17">Horizontal Edge Separate:</div>
        <div class="frow h23 edges"><label>Reference Edge:<input type="text" value="2"></label><label>Object Edge:<input type="text" value="2"></label><label>Offset:<input type="text" value="-30"></label></div>
        <div class="frow h17">Vertical Edge Separate:</div>
        <div class="frow h23 edges"><label>Reference Edge:<input type="text" value="2"></label><label>Object Edge:<input type="text" value="2"></label><label>Offset:<input type="text" value="-30"></label></div>
      </form>
      <div class="tools"><button aria-label="Undo"><svg><use href="#i-undo"/></svg></button><button aria-label="Redo"><svg><use href="#i-redo"/></svg></button><button aria-label="Delete relation"><svg class="tall"><use href="#d-1x"/></svg></button><button aria-label="Delete all relations"><svg class="tall"><use href="#d-2x"/></svg></button><button aria-label="Erase"><svg><use href="#d-er"/></svg></button></div>
      <footer><button class="pill apply"><span><u>A</u>pply</span></button><button class="pill"><span><u>S</u>ave...</span></button><button class="pill"><span><u>C</u>ancel</span></button><button class="pill"><span><u>H</u>elp</span></button></footer>
    </section>
  </div>

  <div class="split"></div>

  <aside class="layers">
    <button class="pill allc">All Colors</button>
    <div class="frame">
      <div class="list">
        <div class="head"><button>V</button><button>S</button></div>
        <ul class="tree fav">
          <li><div class="row"><i class="ex minus"></i><b>Favorite</b></div>
            <ul><li class="row leaf"><i class="dot pink"></i><span>Violation</span><i class="sw blank"></i><input type="checkbox" checked aria-label="Violation visible"><input type="checkbox" checked aria-label="Violation selectable"></li></ul></li>
        </ul>
        <ul class="tree main">
          <li><div class="row"><i class="ex minus"></i><b>Instance</b><input type="checkbox" checked aria-label="Instance visible"><input type="checkbox" checked aria-label="Instance selectable"></div>
            <ul>
              <li><div class="row"><i class="ex minus"></i><label><input type="radio" name="inst" checked>Type</label><input type="checkbox" checked aria-label="Type visible"><input type="checkbox" checked aria-label="Type selectable"></div>
                <ul>
                  <li class="row leaf"><i class="dot"></i><span>Block</span><i class="sw check"></i><input type="checkbox" checked aria-label="Block visible"><input type="checkbox" checked aria-label="Block selectable"></li>
                  <li class="row leaf"><i class="dot"></i><span>StdCell</span><i class="sw dots gray"></i><input type="checkbox" checked aria-label="StdCell visible"><input type="checkbox" checked aria-label="StdCell selectable"></li>
                  <li class="row leaf"><i class="dot"></i><span>Cover</span><i class="sw dots gray"></i><input type="checkbox" checked aria-label="Cover visible"><input type="checkbox" checked aria-label="Cover selectable"></li>
                  <li class="row leaf"><i class="dot"></i><span>Physical</span><i class="sw dots gray"></i><input type="checkbox" checked aria-label="Physical visible"><input type="checkbox" checked aria-label="Physical selectable"></li>
                  <li class="row leaf"><i class="dot"></i><span>IO</span><i class="sw dots gray"></i><input type="checkbox" checked aria-label="IO visible"><input type="checkbox" checked aria-label="IO selectable"></li>
                  <li class="row leaf"><i class="dot"></i><span>Area IO</span><i class="sw dots gray"></i><input type="checkbox" checked aria-label="Area IO visible"><input type="checkbox" checked aria-label="Area IO selectable"></li>
                  <li class="row leaf"><i class="dot"></i><span>Black Box</span><i class="sw solid"></i><input type="checkbox" checked aria-label="Black Box visible"><input type="checkbox" checked aria-label="Black Box selectable"></li>
                </ul></li>
              <li><div class="row"><i class="ex"></i><label><input type="radio" name="inst">Function</label><input type="checkbox" checked aria-label="Function visible"><input type="checkbox" checked aria-label="Function selectable"></div></li>
              <li><div class="row"><i class="ex"></i><label><input type="radio" name="inst">Status</label><input type="checkbox" checked aria-label="Status visible"><input type="checkbox" checked aria-label="Status selectable"></div></li>
            </ul></li>
          <li class="row"><i class="ex"></i><b>Module</b><input type="checkbox" checked aria-label="Module visible"><input type="checkbox" checked aria-label="Module selectable"></li>
          <li class="row"><i class="ex"></i><b>Cell</b><input type="checkbox" class="part" aria-label="Cell visible"><input type="checkbox" class="part" aria-label="Cell selectable"></li>
          <li class="row"><i class="ex"></i><b>Blockage</b><input type="checkbox" class="part" aria-label="Blockage visible"><input type="checkbox" checked aria-label="Blockage selectable"></li>
          <li class="row"><i class="ex"></i><b>Row</b><input type="checkbox" class="part" aria-label="Row visible"><input type="checkbox" aria-label="Row selectable"></li>
          <li class="row"><i class="ex"></i><b>Floorplan</b><input type="checkbox" class="part" aria-label="Floorplan visible"><input type="checkbox" checked aria-label="Floorplan selectable"></li>
          <li class="row"><i class="ex"></i><b>Partition</b><input type="checkbox" checked aria-label="Partition visible"><input type="checkbox" checked aria-label="Partition selectable"></li>
          <li class="row"><i class="ex"></i><b>Power</b><input type="checkbox" class="part" aria-label="Power visible"><input type="checkbox" class="part" aria-label="Power selectable"></li>
          <li class="row"><i class="ex"></i><b>Overlay</b><input type="checkbox" aria-label="Overlay visible"><input type="checkbox" checked disabled aria-label="Overlay selectable"></li>
          <li class="row"><i class="ex"></i><b>Track</b><input type="checkbox" aria-label="Track visible"><i class="nocheck"></i></li>
          <li class="row"><i class="ex"></i><b>Net</b><input type="checkbox" checked aria-label="Net visible"><input type="checkbox" checked aria-label="Net selectable"></li>
          <li class="row"><i class="ex"></i><b>Route</b><input type="checkbox" checked aria-label="Route visible"><input type="checkbox" checked aria-label="Route selectable"></li>
          <li><div class="row"><i class="ex minus"></i><b>Layer</b><input type="checkbox" checked aria-label="Layer visible"><input type="checkbox" checked aria-label="Layer selectable"></div>
            <ul>
              <li class="row leaf"><i class="dot"></i><span>active(0)</span><i class="sw up peach"></i><input type="checkbox" checked aria-label="active visible"><input type="checkbox" checked aria-label="active selectable"></li>
              <li class="row leaf"><i class="dot"></i><span>metal1(1)</span><i class="sw dn blue"></i><input type="checkbox" checked aria-label="metal1 visible"><input type="checkbox" checked aria-label="metal1 selectable"></li>
              <li class="row leaf"><i class="dot"></i><span>via1(1)</span><i class="sw dots red"></i><input type="checkbox" checked aria-label="via1 visible"><input type="checkbox" checked aria-label="via1 selectable"></li>
              <li class="row leaf"><i class="dot"></i><span>metal2(2)</span><i class="sw up red"></i><input type="checkbox" checked aria-label="metal2 visible"><input type="checkbox" checked aria-label="metal2 selectable"></li>
              <li class="row leaf"><i class="dot"></i><span>via2(2)</span><i class="sw dots green"></i><input type="checkbox" checked aria-label="via2 visible"><input type="checkbox" checked aria-label="via2 selectable"></li>
              <li class="row leaf"><i class="dot"></i><span>metal3(3)</span><i class="sw dn far green"></i><input type="checkbox" checked aria-label="metal3 visible"><input type="checkbox" checked aria-label="metal3 selectable"></li>
              <li class="row leaf"><i class="dot"></i><span>via3(3)</span><i class="sw dots olive"></i><input type="checkbox" checked aria-label="via3 visible"><input type="checkbox" checked aria-label="via3 selectable"></li>
              <li class="row leaf"><i class="dot"></i><span>metal4(4)</span><i class="sw up far olive"></i><input type="checkbox" checked aria-label="metal4 visible"><input type="checkbox" checked aria-label="metal4 selectable"></li>
              <li class="row leaf"><i class="dot"></i><span>via4(4)</span><i class="sw dots brick"></i><input type="checkbox" checked aria-label="via4 visible"><input type="checkbox" checked aria-label="via4 selectable"></li>
              <li class="row leaf"><i class="dot"></i><span>metal5(5)</span><i class="sw dn far brick"></i><input type="checkbox" checked aria-label="metal5 visible"><input type="checkbox" checked aria-label="metal5 selectable"></li>
              <li class="row leaf"><i class="dot"></i><span>via5(5)</span><i class="sw dots orange"></i><input type="checkbox" checked aria-label="via5 visible"><input type="checkbox" checked aria-label="via5 selectable"></li>
              <li class="row leaf"><i class="dot"></i><span>metal6(6)</span><i class="sw up far orange"></i><input type="checkbox" checked aria-label="metal6 visible"><input type="checkbox" checked aria-label="metal6 selectable"></li>
              <li class="row leaf"><i class="dot"></i><span>via6(6)</span><i class="sw dots magenta"></i><input type="checkbox" checked aria-label="via6 visible"><input type="checkbox" checked aria-label="via6 selectable"></li>
              <li class="row leaf"><i class="dot"></i><span>metal7(7)</span><i class="sw dn far magenta"></i><input type="checkbox" checked aria-label="metal7 visible"><input type="checkbox" checked aria-label="metal7 selectable"></li>
              <li class="row leaf"><i class="dot"></i><span>via7(7)</span><i class="sw dots cyan"></i><input type="checkbox" checked aria-label="via7 visible"><input type="checkbox" checked aria-label="via7 selectable"></li>
              <li class="row leaf"><i class="dot"></i><span>metal8(8)</span><i class="sw up far cyan"></i><input type="checkbox" checked aria-label="metal8 visible"><input type="checkbox" checked aria-label="metal8 selectable"></li>
              <li class="row leaf"><i class="dot"></i><span>via8(8)</span><i class="sw dots brown"></i><input type="checkbox" checked aria-label="via8 visible"><input type="checkbox" checked aria-label="via8 selectable"></li>
              <li class="row leaf"><i class="dot"></i><span>metal9(9)</span><i class="sw dn far brown"></i><input type="checkbox" checked aria-label="metal9 visible"><input type="checkbox" checked aria-label="metal9 selectable"></li>
              <li class="row leaf"><i class="dot"></i><span>via9(9)</span><i class="sw dots yellow"></i><input type="checkbox" checked aria-label="via9 visible"><input type="checkbox" checked aria-label="via9 selectable"></li>
              <li class="row leaf"><i class="dot"></i><span>metal10(10)</span><i class="sw up far yellow"></i><input type="checkbox" checked aria-label="metal10 visible"><input type="checkbox" checked aria-label="metal10 selectable"></li>
            </ul></li>
        </ul>
      </div>
      <div class="scroll"><svg viewBox="0 0 16 16"><path d="M8 4L12 12H4Z"/></svg><div class="trough"><i class="thumb"></i></div><svg viewBox="0 0 16 16"><path d="M8 12L12 4H4Z"/></svg></div>
    </div>
    <div class="detail">
      <label><input type="radio" name="mode" checked> Adaptive</label>
      <div class="drow"><label><input type="radio" name="mode"> Detail</label><span class="slide"><input type="range" min="0" max="100" value="0" aria-label="Speed"></span><span class="speed">Speed</span></div>
    </div>
  </aside>
</main>

<div class="cmd">
  <i class="grip"></i>
  <span class="combo act"><select aria-label="Action"><option>select</option></select><svg viewBox="0 0 5 9"><path d="M0 0L5 4.500L0 9Z"/></svg></span>
  <span class="combo act"><select aria-label="Object kind"><option>Instance</option></select><svg viewBox="0 0 5 9"><path d="M0 0L5 4.500L0 9Z"/></svg></span>
  <input class="name" type="text" placeholder="Enter Instance name." aria-label="Instance name">
  <label class="append"><input type="checkbox" checked> Append</label>
  <label class="coords">coords <input type="text" value="0, 0"></label>
  <label class="radius">radius <input type="text" value="150"></label>
  <button class="pill goto">Goto</button>
</div>

<div class="status">
  <button class="raised">Q</button>
  <button class="raised" aria-label="Query"><svg viewBox="0 0 18 18"><path d="M1 1H5V5H1Z" fill="#fff" stroke="#c44" /><path d="M1 7H5V11H1Z" fill="#5570a8"/><path d="M1 13H5V17H1Z" fill="#fff" stroke="#e39b4a"/><circle cx="12" cy="9" r="5" fill="#eef" stroke="#56708f" stroke-width="2"/><path d="M12 6V9H15" stroke="#333" fill="none"/><path d="M12 14H18L15 17Z"/></svg></button>
  <div class="msg"><span>Click to select single object. Shift+Click to de/select multiple objects.</span><strong>4121.68150, 632.06250 <span class="sel">Sel: 1</span> <span class="mem">In Memory</span></strong></div>
  <i class="tail"></i>
</div>
</body>
</html>
```
FILE: styles.css
```css
* { box-sizing: border-box; }
body {
  margin: 0; height: 100vh; display: flex; flex-direction: column; overflow: hidden;
  background: #efefef; color: #111; font: 12px/17px "Noto Sans", sans-serif;
  border-top: 2px solid #3c3b37; border-bottom: 2px solid #3c3b37;
}
button, input, select { font: inherit; color: inherit; margin: 0; padding: 0; border: 0; background: none; border-radius: 0; }
button { flex: none; }
svg { flex: none; display: block; }
i { display: block; flex: none; }
u { text-underline-offset: 2px; }
.defs { width: 0; height: 0; position: absolute; }

.menubar { height: 31px; flex: none; display: flex; align-items: center; gap: 12px; padding: 0 8px 0 10px; background: linear-gradient(#d8d8d8, #f3f3f3 4px); border-bottom: 4px solid #c80000; }
.menubar a { color: #111; text-decoration: none; }
.menubar a.off { color: #999; }
.search { margin-left: auto; width: 110px; height: 22px; display: flex; align-items: center; background: #fff; border: 1px solid #ccc; border-top: 1px solid #888; border-radius: 3px; }
.search svg { width: 12px; height: 12px; }
.search input { width: 90px; padding-left: 9px; outline: 0; }
::placeholder { color: #929292; opacity: 1; }
.logo { font-size: 18px; line-height: 24px; font-weight: 600; margin-left: -7px; color: #333; }
.logo .bar { position: relative; }
.logo .bar::before { content: ""; position: absolute; left: 2px; right: 2px; top: 3px; height: 2px; background: #e03030; }

.tabs { height: 29px; flex: none; display: flex; align-items: flex-end; padding-left: 2px; }
.tab { width: 57px; height: 24px; padding-bottom: 2px; border: 1px solid #bbb; border-bottom: 0; border-left: 2px solid #fff; }
.addtab { width: 22px; height: 22px; margin-bottom: 2px; border: 1px solid #bbb; border-radius: 3px; background: linear-gradient(#f2f2f2, #c6c6c6); display: grid; place-items: center; }
.addtab svg { width: 15px; height: 15px; }

.bars { flex: none; padding-left: 3px; padding-right: 1px; border-right: 1px solid #222; }
.barrow { display: flex; height: 30px; }
.group { display: flex; align-items: center; height: 30px; padding: 0 0 1px 3px; background: linear-gradient(#efefef, #b5b5b5); border-bottom: 1px solid #7c7c7c; border-radius: 0 0 3px 3px; }
.group.grow { flex: 1; }
.grip { width: 5px; height: 18px; background: repeating-linear-gradient(90deg, #8d8d8d 0 1px, #eee 1px 2px); }
.tb { width: 31px; height: 28px; display: grid; place-items: center; }
.tb svg { width: 20px; height: 20px; }
.tb svg.wide { width: 24px; }
.tb.faded { opacity: .45; }
.pressed { border: 1px solid #000; border-radius: 4px; background: linear-gradient(#b4b4b4, #d8d8d8); }
.tb.pressed { width: 29px; margin-right: 1px; }
.caret { width: 10px; height: 28px; position: relative; }
.caret::before { content: ""; display: block; margin: 0 auto; width: 8px; height: 4px; background: #c40000; clip-path: polygon(0 0, 100% 0, 50% 100%); }
.caret.grey::before { background: #999; }
.sep { width: 1px; height: 18px; background: #888; margin: 0 1px; }
.sep.push { margin-left: auto; margin-right: 3px; }

.work { flex: 1; min-height: 0; display: flex; padding-left: 3px; padding-right: 1px; border-right: 1px solid #222; }
.side { width: 41px; flex: none; background: linear-gradient(90deg, #f4f4f4, #b7b7b7); border-bottom: 1px solid #777; border-radius: 0 0 3px 3px; padding-top: 5px; }
.vgrip { height: 5px; margin: 0 4px -2px; background: repeating-linear-gradient(#8d8d8d 0 1px, #eee 1px 2px); }
.srow { height: 30px; display: flex; align-items: center; }
.srow button:first-child { width: 31px; display: grid; place-items: center; }
.srow svg { width: 20px; height: 20px; }
.srow svg.big { width: 24px; height: 24px; }
.srow svg.net { width: 30px; height: 22px; margin-left: 4px; }
.netlab { font: bold 13px "Noto Sans", sans-serif; }
.srow .snap { font-size: 10px; font-weight: 600; }
.srow .bigA { font-size: 26px; line-height: 30px; font-weight: bold; color: #333; }

.canvas { flex: 1; min-width: 0; position: relative; background: #000; overflow: hidden; }
.plan { width: 100%; height: 100%; }
.lab { fill: #fff; font-size: 12px; }
.palette { position: absolute; right: 0; top: 0; background: #f0f0f0; border: 1px solid #bbb; }
.palette svg { width: 21px; height: 23px; }
.corner { position: absolute; right: 3px; bottom: 3px; width: 12px; height: 12px; }

.dialog { position: absolute; left: 898px; top: 61px; width: 546px; background: #efefef; border-radius: 6px 6px 0 0; overflow: hidden; }
.dialog header { height: 30px; display: flex; align-items: center; gap: 4px; padding: 0 6px 0 7px; background: linear-gradient(#5a5850, #403f3a); }
.dialog h1 { flex: 1; margin: 0; min-width: 0; font: bold 14px/20px "Open Sans", sans-serif; color: #dfdbd2; white-space: nowrap; overflow: hidden; }
.dialog header button { width: 16px; height: 16px; border-radius: 50%; background: #83807a; box-shadow: 0 0 0 1px #33322e; }
.dialog header svg { width: 16px; height: 16px; fill: none; stroke: #3c3b37; }
.dialog header .close { background: #ea5f36; }
.dtabs { height: 31px; display: flex; align-items: flex-end; padding-left: 6px; }
.dtabs button { height: 22px; padding: 0 9px; border: 1px solid #aaa; border-bottom: 0; background: #cfcfcf; }
.dtabs .on { height: 23px; padding: 0 9px 0 8px; background: #efefef; border-left: 2px solid #fff; border-right: 0; }
.pane { margin: 0 6px; padding: 7px 6px 9px; border: 2px solid #111; border-top-color: #fff; border-left-color: #fff; border-top-width: 1px; }
.frow { display: flex; align-items: center; }
.h17 { height: 17px; } .h22 { height: 22px; } .h23 { height: 23px; } .h24 { height: 24px; }
.c1 { width: 138px; }
.c2 { width: 107px; }
.frow label { display: flex; align-items: center; gap: 6px; }
.ind { padding-left: 15px; }
input[type=text] { height: 23px; padding: 0 4px; background: #fff; border: 1px solid #ccc; border-top: 2px solid #8a8a8a; border-radius: 3px 3px 0 0; outline: 0; }
input[type=text]:disabled { background: #e0e0e0; }
.frow > input { width: 286px; margin-right: 4px; }
.pill { height: 23px; border: 1px solid #9a9a9a; border-bottom: 2px solid #888; border-radius: 10px; background: linear-gradient(#fafafa, #bcbcbc); text-align: center; white-space: nowrap; }
.pill:disabled, .frow select:disabled { color: #8e8e8e; opacity: 1; }
.frow .pill { width: 90px; }
.edges { padding-left: 15px; }
.edges label { gap: 0; justify-content: flex-end; margin-right: 15px; white-space: pre; }
.edges label:nth-child(1) { width: 152px; } .edges label:nth-child(2) { width: 132px; } .edges label:nth-child(3) { width: 100px; }
.edges input { width: 62px; }
select { appearance: none; outline: 0; text-align: center; flex: 1; min-width: 0; }
.combo { display: flex; align-items: center; height: 23px; border: 1px solid #9a9a9a; border-bottom: 2px solid #888; border-radius: 10px; background: linear-gradient(#fafafa, #bcbcbc); }
.frow .combo { background: linear-gradient(#e2e2e2, #b4b4b4); padding: 0 7px 0 9px; width: 61px; }
.frow .combo svg { width: 6px; height: 8px; fill: #888; }
.frow .combo.rot { width: 65px; padding-left: 17px; }
.frow .combo svg.ori { width: 10px; height: 18px; fill: none; stroke: #9fb0d0; stroke-width: 2; }
.tools { display: flex; gap: 5px; padding: 1px 6px 5px; border-bottom: 2px solid #fff; }
.tools button { width: 31px; height: 30px; display: grid; place-items: center; border: 1px solid #aaa; border-radius: 3px; background: linear-gradient(#fafafa, #bcbcbc); }
.tools svg { width: 17px; height: 17px; }
.tools svg.tall { width: 22px; height: 24px; }
.dialog footer { display: grid; grid-template-columns: repeat(4, 121px); justify-content: center; justify-items: center; padding: 6px 3px 6px 0; border-bottom: 1px solid #888; }
.dialog footer .pill { width: 64px; }
.pill.apply { background: linear-gradient(#d80000, #8c0000); color: #fff; font-weight: bold; border-color: #8c0000; }

input[type=checkbox], input[type=radio] { appearance: none; width: 12px; height: 12px; flex: none; background: linear-gradient(#fff, #e0e0e0); border: 1px solid #ccc; border-bottom-color: #777; border-radius: 2px; display: grid; place-items: center; }
input[type=radio] { border-radius: 50%; border-color: #aaa; border-bottom-color: #777; }
input[type=radio]:checked::before { content: ""; width: 6px; height: 6px; border-radius: 50%; background: #c80000; }
input[type=checkbox]:checked::before { content: ""; width: 10px; height: 8px; background: #c80000; clip-path: polygon(0 25%, 25% 25%, 42% 55%, 75% 0, 100% 0, 55% 100%, 30% 100%); }
input[type=checkbox]:disabled::before { background: #a86060; }
input.part::before { content: ""; width: 6px; height: 4px; background: #c80000; }

.split { width: 6px; flex: none; background: #cbccd2; border-right: 1px solid #fff; }
.layers { width: 206px; flex: none; display: flex; flex-direction: column; }
.allc { width: 78px; height: 22px; }
.frame { flex: 1; min-height: 0; display: flex; margin-top: 1px; border: 3px double #000; border-right: 0; border-bottom: 1px solid #fff; border-left-width: 4px; padding-right: 4px; background: #fff; }
.list { flex: 1; min-width: 0; overflow: hidden; display: flex; flex-direction: column; }
.head { height: 19px; flex: none; display: flex; justify-content: flex-end; gap: 1px; padding-right: 1px; background: linear-gradient(#c4c4c4, #a0a0a0); }
.head button { width: 17px; height: 18px; border: 1px solid #888; border-radius: 9px; background: linear-gradient(#fff, #ccc); }
ul { list-style: none; margin: 0; padding: 0; position: relative; }
.tree ul { padding-left: 20px; }
.tree ul::before, .main::before { content: ""; position: absolute; left: 30px; top: 0; bottom: 8px; border-left: 1px dotted #555; }
.main { flex: 1; }
.main::before { left: 10px; top: 8px; bottom: 0; }
.fav { background: #dedede; border-bottom: 2px solid #888; border-left: 1px solid #888; padding-left: 1px; height: 34px; flex: none; }
.fav ul::before { bottom: 10px; }
.row { height: 17px; display: flex; align-items: center; padding: 0 3px 0 6px; position: relative; }
.row b, .row span, .row label { flex: 1; }
.row label { display: flex; align-items: center; gap: 3px; }
.row > input { margin-left: 4px; }
.row > .sw + input { margin-left: 1px; }
.ex { width: 9px; height: 9px; margin-right: 7px; border: 1px solid #555; background: linear-gradient(#000, #000) center / 5px 1px no-repeat, linear-gradient(#000, #000) center / 1px 5px no-repeat, #fff; position: relative; }
.ex.minus { background: linear-gradient(#000, #000) center / 5px 1px no-repeat, #fff; }
.ex::after { content: ""; position: absolute; left: 9px; top: 3px; width: 4px; border-top: 1px dotted #555; }
.leaf { padding-left: 23px; }
.leaf::before { content: ""; position: absolute; left: 10px; top: 8px; width: 10px; border-top: 1px dotted #555; }
.dot { width: 10px; height: 10px; border: 1px solid #ccc; border-radius: 50%; margin-right: 1px; }
.dot.pink { background: #ffb6c1; }
.nocheck { width: 12px; margin-left: 4px; }
.sw { width: 16px; height: 16px; border: 1px solid; color: #888; background-color: #fff; --s: 3px; }
.blank { border-color: #fff; }
.solid { background: #5f6363; }
.check { background: repeating-conic-gradient(#999 0 25%, #fff 0 50%) 0 0 / 2px 2px; }
.dots { background: conic-gradient(from 0deg at 1px 1px, transparent 75%, currentColor 0) 1px 1px / 4px 4px, conic-gradient(from 0deg at 1px 1px, transparent 75%, currentColor 0) 3px 3px / 4px 4px, #fff; }
.up { background: repeating-linear-gradient(135deg, currentColor 0 1px, #fff 1px var(--s)); }
.dn { background: repeating-linear-gradient(45deg, currentColor 0 1px, #fff 1px var(--s)); }
.far { --s: 6px; }
.peach { color: #f4a460; } .blue { color: #0000e0; } .red { color: #f00; } .green { color: #00d000; } .olive { color: #cdcd00; } .brick { color: #a52a2a; }
.orange { color: #ffa500; } .magenta { color: #d000d0; } .cyan { color: #00ced1; } .brown { color: #8b4513; } .yellow { color: #ff0; }
.scroll { width: 16px; flex: none; display: flex; flex-direction: column; background: #8e8e8e; }
.scroll svg { width: 16px; height: 16px; background: #ccc; fill: #f2f2f2; stroke: #888; }
.trough { flex: 1; }
.thumb { height: 94%; border-radius: 8px; border: 1px solid #888; background: linear-gradient(90deg, #aaa, #c0c0c0, #b0b0b0); }
.detail { height: 65px; flex: none; display: flex; flex-direction: column; gap: 13px; padding-top: 7px; }
.detail label { display: flex; align-items: center; gap: 6px; }
.drow { display: flex; align-items: center; }
.slide { width: 88px; margin: 0 9px 0 14px; height: 18px; background: linear-gradient(90deg, transparent 25px, #aaa 25px 26px, transparent 26px 44px, #aaa 44px 45px, transparent 45px 63px, #aaa 63px 64px, transparent 64px) 0 100% / 100% 4px no-repeat; }
.slide input { appearance: none; width: 100%; height: 14px; display: block; background: linear-gradient(#ccc, #ccc) 0 6px / 100% 1px no-repeat; }
.slide input::-webkit-slider-thumb { appearance: none; width: 10px; height: 13px; border: 1px solid #bbb; border-radius: 2px; background: linear-gradient(#d00, #d00) center / 2px 6px no-repeat, #eee; }
.speed { color: #a0a0a0; }

.cmd { flex: none; height: 24px; display: flex; align-items: center; margin: 0 2px 2px 3px; padding-left: 3px; background: linear-gradient(#e8e8e8, #b5b5b5); }
.cmd .act { width: 98px; margin-right: 2px; padding: 0 6px 0 4px; }
.act svg { width: 5px; height: 9px; fill: #c80000; }
.name { flex: 1; min-width: 0; }
.append, .coords, .radius { display: flex; align-items: center; gap: 6px; }
.append { margin-left: 1px; width: 130px; }
.coords input { width: 75px; }
.radius { margin-left: 6px; }
.radius input { width: 41px; margin-right: 1px; }
.goto { width: 49px; }
.status { flex: none; height: 26px; display: flex; gap: 5px; padding: 1px 2px 1px 3px; background: #efefef; border-right: 1px solid #222; }
.raised { width: 24px; height: 24px; background: #fff; border: 1px solid #777; border-right: 2px solid #000; border-bottom: 2px solid #000; font-weight: bold; display: grid; place-items: center; }
.raised svg { width: 18px; height: 18px; }
.msg { flex: 1; display: flex; align-items: center; justify-content: space-between; padding: 0 5px; background: #fff; border-top: 1px solid #555; border-left: 1px solid #555; }
.msg strong { color: #666; }
.sel { color: #6a92d8; }
.mem { color: #3fbcc4; }
.tail { width: 1px; border-left: 1px solid #555; }
```
